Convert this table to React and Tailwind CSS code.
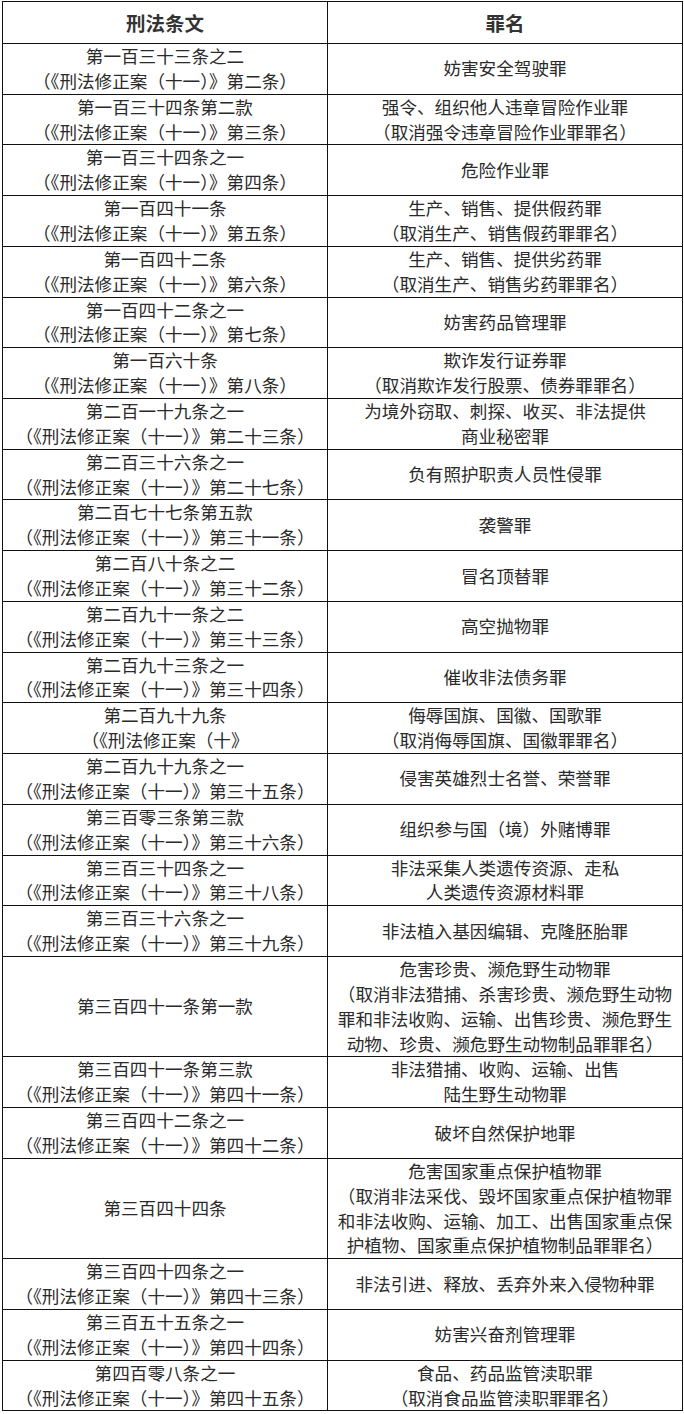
import React from "react";

const rows = [
  [["第一百三十三条之二", "（《刑法修正案（十一）》第二条）"], ["妨害安全驾驶罪"]],
  [["第一百三十四条第二款", "（《刑法修正案（十一）》第三条）"], ["强令、组织他人违章冒险作业罪", "（取消强令违章冒险作业罪罪名）"]],
  [["第一百三十四条之一", "（《刑法修正案（十一）》第四条）"], ["危险作业罪"]],
  [["第一百四十一条", "（《刑法修正案（十一）》第五条）"], ["生产、销售、提供假药罪", "（取消生产、销售假药罪罪名）"]],
  [["第一百四十二条", "（《刑法修正案（十一）》第六条）"], ["生产、销售、提供劣药罪", "（取消生产、销售劣药罪罪名）"]],
  [["第一百四十二条之一", "（《刑法修正案（十一）》第七条）"], ["妨害药品管理罪"]],
  [["第一百六十条", "（《刑法修正案（十一）》第八条）"], ["欺诈发行证券罪", "（取消欺诈发行股票、债券罪罪名）"]],
  [["第二百一十九条之一", "（《刑法修正案（十一）》第二十三条）"], ["为境外窃取、刺探、收买、非法提供", "商业秘密罪"]],
  [["第二百三十六条之一", "（《刑法修正案（十一）》第二十七条）"], ["负有照护职责人员性侵罪"]],
  [["第二百七十七条第五款", "（《刑法修正案（十一）》第三十一条）"], ["袭警罪"]],
  [["第二百八十条之二", "（《刑法修正案（十一）》第三十二条）"], ["冒名顶替罪"]],
  [["第二百九十一条之二", "（《刑法修正案（十一）》第三十三条）"], ["高空抛物罪"]],
  [["第二百九十三条之一", "（《刑法修正案（十一）》第三十四条）"], ["催收非法债务罪"]],
  [["第二百九十九条", "（《刑法修正案（十》"], ["侮辱国旗、国徽、国歌罪", "（取消侮辱国旗、国徽罪罪名）"]],
  [["第二百九十九条之一", "（《刑法修正案（十一）》第三十五条）"], ["侵害英雄烈士名誉、荣誉罪"]],
  [["第三百零三条第三款", "（《刑法修正案（十一）》第三十六条）"], ["组织参与国（境）外赌博罪"]],
  [["第三百三十四条之一", "（《刑法修正案（十一）》第三十八条）"], ["非法采集人类遗传资源、走私", "人类遗传资源材料罪"]],
  [["第三百三十六条之一", "（《刑法修正案（十一）》第三十九条）"], ["非法植入基因编辑、克隆胚胎罪"]],
  [["第三百四十一条第一款"], ["危害珍贵、濒危野生动物罪", "（取消非法猎捕、杀害珍贵、濒危野生动物", "罪和非法收购、运输、出售珍贵、濒危野生", "动物、珍贵、濒危野生动物制品罪罪名）"]],
  [["第三百四十一条第三款", "（《刑法修正案（十一）》第四十一条）"], ["非法猎捕、收购、运输、出售", "陆生野生动物罪"]],
  [["第三百四十二条之一", "（《刑法修正案（十一）》第四十二条）"], ["破坏自然保护地罪"]],
  [["第三百四十四条"], ["危害国家重点保护植物罪", "（取消非法采伐、毁坏国家重点保护植物罪", "和非法收购、运输、加工、出售国家重点保", "护植物、国家重点保护植物制品罪罪名）"]],
  [["第三百四十四条之一", "（《刑法修正案（十一）》第四十三条）"], ["非法引进、释放、丢弃外来入侵物种罪"]],
  [["第三百五十五条之一", "（《刑法修正案（十一）》第四十四条）"], ["妨害兴奋剂管理罪"]],
  [["第四百零八条之一", "（《刑法修正案（十一）》第四十五条）"], ["食品、药品监管渎职罪", "（取消食品监管渎职罪罪名）"]],
];

function Cell({ lines, rows }) {
  return (
    <td className="border border-[#111] p-0 text-center align-middle">
      <div
        className="flex flex-col justify-center"
        style={{ minHeight: `${rows * 24.86}px` }}
      >
        {lines.map((l, i) => (
          <div key={i} className="whitespace-nowrap leading-[24.86px]">
            {l}
          </div>
        ))}
      </div>
    </td>
  );
}

export default function App() {
  return (
    <div
      className="bg-white pl-[2px] pt-[1px] text-[#2a2a2a] text-[17.6px]"
      style={{ fontFamily: '"Noto Sans CJK SC", "Noto Sans", sans-serif' }}
    >
      <table className="w-[680px] border-collapse table-fixed">
        <colgroup>
          <col className="w-[325px]" />
          <col className="w-[355px]" />
        </colgroup>
        <thead>
          <tr className="h-[42px]">
            <th className="border border-[#111] p-0 text-center align-middle font-bold text-[19.5px] text-[#333]">
              刑法条文
            </th>
            <th className="border border-[#111] p-0 text-center align-middle font-bold text-[19.5px] text-[#333]">
              罪名
            </th>
          </tr>
        </thead>
        <tbody>
          {rows.map(([l, r], i) => {
            const n = Math.max(2, l.length, r.length);
            return (
              <tr key={i}>
                <Cell lines={l} rows={n} />
                <Cell lines={r} rows={n} />
              </tr>
            );
          })}
        </tbody>
      </table>
    </div>
  );
}
